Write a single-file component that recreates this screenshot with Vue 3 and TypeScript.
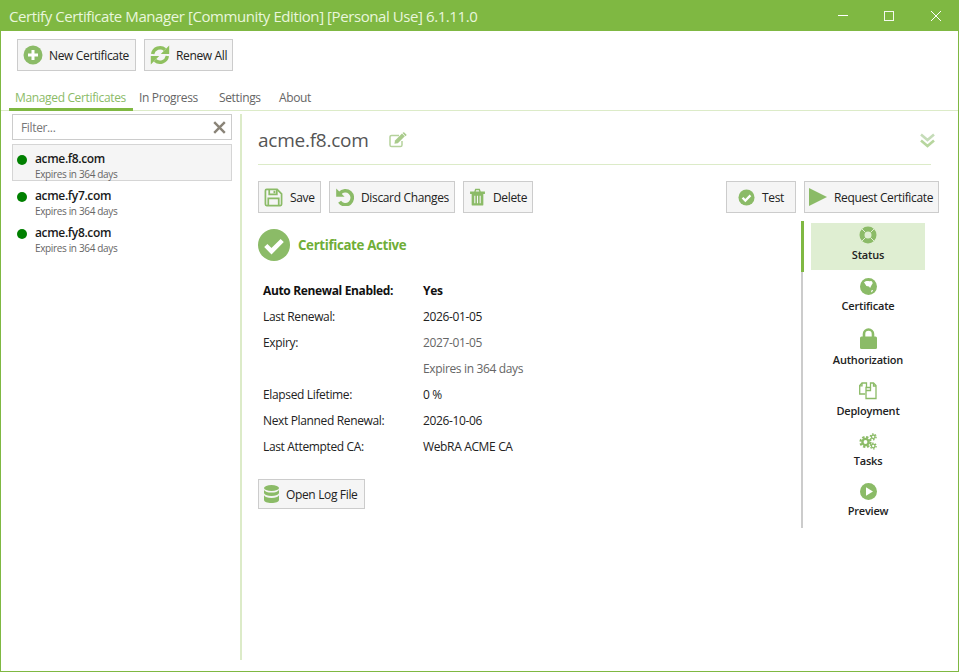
<script setup lang="ts">
const sites = [
  { name: "acme.f8.com", selected: true },
  { name: "acme.fy7.com", selected: false },
  { name: "acme.fy8.com", selected: false },
];

const tabs = ["Managed Certificates", "In Progress", "Settings", "About"];

const details = [
  { label: "Auto Renewal Enabled:", value: "Yes", kind: "strong" },
  { label: "Last Renewal:", value: "2026-01-05", kind: "" },
  { label: "Expiry:", value: "2027-01-05", kind: "muted" },
  { label: "", value: "Expires in 364 days", kind: "muted" },
  { label: "Elapsed Lifetime:", value: "0 %", kind: "" },
  { label: "Next Planned Renewal:", value: "2026-10-06", kind: "" },
  { label: "Last Attempted CA:", value: "WebRA ACME CA", kind: "" },
];
</script>

<template>
  <div class="window">
    <header class="titlebar">
      <span class="title">Certify Certificate Manager [Community Edition] [Personal Use] 6.1.11.0</span>
      <div class="controls">
        <svg width="46" height="31" viewBox="0 0 46 31"><path d="M17 15.500h10" stroke="#fff" /></svg>
        <svg width="46" height="31" viewBox="0 0 46 31"><rect x="17.500" y="11.500" width="9" height="9" fill="none" stroke="#f4f9ee" /></svg>
        <svg width="46" height="31" viewBox="0 0 46 31"><path d="M18 11l10 10M28 11l-10 10" stroke="#fff" /></svg>
      </div>
    </header>

    <div class="toolbar">
      <button class="btn new-btn">
        <svg width="20" height="20" viewBox="0 0 20 20"><circle cx="10" cy="10" r="9.500" fill="#8bbb67" /><path d="M10 5v10M5 10h10" stroke="#fff" stroke-width="3" /></svg>
        New Certificate
      </button>
      <button class="btn renew-btn">
        <svg width="20" height="20" viewBox="0 0 20 20"><g fill="none" stroke="#8fc05f" stroke-width="3.400"><path d="M2.600 9A7.600 7.600 0 0 1 15 4.600" /><path d="M17.400 11A7.600 7.600 0 0 1 5 15.400" /></g><path d="M19.200 .6v8.400H10.800zM.8 19.400V11H9.200z" fill="#8fc05f" /></svg>
        Renew All
      </button>
    </div>

    <nav class="tabs">
      <span v-for="(tab, i) in tabs" :key="tab" class="tab" :class="['tab' + i, { active: i === 0 }]">{{ tab }}</span>
    </nav>

    <main class="body">
      <aside class="sidebar">
        <div class="filter">
          <span>Filter...</span>
          <svg width="13" height="13" viewBox="0 0 13 13"><path d="M1.200 1.200l10.600 10.600M11.800 1.200L1.200 11.800" stroke="#8a8478" stroke-width="2.400" /></svg>
        </div>
        <div v-for="site in sites" :key="site.name" class="site" :class="{ selected: site.selected }">
          <i class="dot"></i>
          <div>
            <div class="site-name">{{ site.name }}</div>
            <div class="site-exp">Expires in 364 days</div>
          </div>
        </div>
      </aside>

      <section class="detail">
        <div class="heading">
          <h1>acme.f8.com</h1>
          <svg class="edit" width="18" height="16" viewBox="0 0 18 16"><path d="M13 9v4a1.600 1.600 0 0 1-1.600 1.600H2.600A1.600 1.600 0 0 1 1 13V5a1.600 1.600 0 0 1 1.600-1.600H10" fill="none" stroke="#b5d29c" stroke-width="1.500" /><path d="M6 8.400l7-7 2.800 2.800-7 7-3.400.6z" fill="#a9cb8b" /><path d="M14 .5l1-.3 2.600 2.600-.5 1-.6.5L13.600 1z" fill="#a9cb8b" /></svg>
          <svg class="chevrons" width="15" height="15" viewBox="0 0 15 15" fill="none" stroke="#b7d69e" stroke-width="2.600"><path d="M1 1.500l6.500 5.500L14 1.500" stroke="#c5dcb8" /><path d="M1 7.500l6.500 5.500L14 7.500" /></svg>
        </div>

        <div class="actions">
          <button class="btn save-btn">
            <svg width="19" height="19" viewBox="0 0 20 20" fill="none" stroke="#8bbb67" stroke-width="1.800"><path d="M1.500 2.800c0-.7.6-1.300 1.300-1.300h11l4.700 4.700v11c0 .7-.6 1.300-1.300 1.300H2.800c-.7 0-1.300-.6-1.300-1.300z" /><path d="M5.500 1.800v5h8v-5M4.500 18v-7h11v7" /><path d="M11 3v2.500" stroke-width="2" /></svg>
            Save
          </button>
          <button class="btn discard-btn">
            <svg width="18" height="18" viewBox="0 0 18 18"><path d="M3.800 5.400A7 7 0 1 1 3.600 13.800" fill="none" stroke="#8bbb67" stroke-width="3.600" /><path d="M.2.400v8.400h8.400z" fill="#8bbb67" /></svg>
            Discard Changes
          </button>
          <button class="btn delete-btn">
            <svg width="17" height="18" viewBox="0 0 17 20"><path d="M1 4.500h15V6H1zM5.500 4.500l1-2.800h4l1 2.800" fill="none" stroke="#8bbb67" stroke-width="1.500" /><path d="M2 6h13v12.500a1 1 0 0 1-1 1H3a1 1 0 0 1-1-1z" fill="#8bbb67" /><path d="M5.500 8.500v8.500M8.500 8.500v8.500M11.500 8.500v8.500" stroke="#f5f5f5" stroke-width="1.200" /></svg>
            Delete
          </button>
          <span class="spacer"></span>
          <button class="btn test-btn">
            <svg width="17" height="17" viewBox="0 0 18 18"><circle cx="9" cy="9" r="8.500" fill="#8bbb67" /><path d="M4.800 9.200l3 3 5.400-5.400" fill="none" stroke="#fff" stroke-width="2.400" /></svg>
            Test
          </button>
          <button class="btn request-btn">
            <svg width="18" height="18" viewBox="0 0 18 18"><path d="M0 0l18 9-18 9z" fill="#8bbb67" /></svg>
            Request Certificate
          </button>
        </div>

        <div class="panels">
          <div class="status">
            <div class="status-head">
              <svg width="32" height="32" viewBox="0 0 32 32"><circle cx="16" cy="16" r="16" fill="#8bbb67" /><path d="M7.800 16.500l5.700 5.700 10.700-10.700" fill="none" stroke="#fff" stroke-width="4.500" /></svg>
              <span>Certificate Active</span>
            </div>
            <dl class="facts">
              <div v-for="row in details" :key="row.value" class="fact" :class="row.kind">
                <dt>{{ row.label }}</dt>
                <dd>{{ row.value }}</dd>
              </div>
            </dl>
            <button class="btn log-btn">
              <svg width="15" height="18" viewBox="0 0 15 18" fill="#8bbb67"><ellipse cx="7.500" cy="3" rx="7.500" ry="3" /><path d="M0 5c1 1.700 3.800 2.600 7.500 2.600S14 6.700 15 5v3.300c-1 1.700-3.800 2.600-7.500 2.600S1 10 0 8.300zM0 10.300c1 1.700 3.800 2.600 7.500 2.600S14 12 15 10.300V15c0 1.700-3.400 3-7.500 3S0 16.700 0 15z" /></svg>
              Open Log File
            </button>
          </div>

          <nav class="sidenav">
            <div class="navitem active">
              <svg width="18" height="18" viewBox="0 0 18 18"><circle cx="9" cy="9" r="6" fill="none" stroke="#8bbb67" stroke-width="5" /><path d="M3 3l3.400 3.400M15 3l-3.400 3.400M3 15l3.400-3.400M15 15l-3.400-3.400" stroke="#dfeed2" stroke-width="1" /></svg>
              <span>Status</span>
            </div>
            <div class="navitem cert">
              <svg width="17" height="17" viewBox="0 0 17 17"><circle cx="8.500" cy="8.500" r="8.500" fill="#8bbb67" /><path d="M4 4.200c1.600-1.500 3.800-1.500 5.500-1l1.800-.2c.9.700 1.400 1.500 1.300 2.400l-1 1.700-1.500 2.800L9 8.600 6.400 7.900zM11 12.800l1.700-.9.400.9-1.600 1.700z" fill="#fff" /></svg>
              <span>Certificate</span>
            </div>
            <div class="navitem auth">
              <svg width="17" height="21" viewBox="0 0 17 21"><path d="M4 9V6a4.500 4.500 0 0 1 9 0v3" fill="none" stroke="#8bbb67" stroke-width="2.600" /><rect y="8.500" width="17" height="12.500" rx="1.500" fill="#8bbb67" /></svg>
              <span>Authorization</span>
            </div>
            <div class="navitem deploy">
              <svg width="18" height="18" viewBox="0 0 18 18" fill="none" stroke="#8bbb67" stroke-width="1.300"><path d="M7.500 5V1H3L.7 3.500v8.500h5.500" /><path d="M3 1v2.800H.7" /><path d="M7 5.500h4.500V1h3L17 3.500v13H7z" fill="#fff" /><path d="M7 8.500h4.500v-3M14.500 1v3H17" /></svg>
              <span>Deployment</span>
            </div>
            <div class="navitem tasks">
              <svg width="18" height="17" viewBox="0 0 18 17" fill="none" stroke="#8bbb67"><circle cx="6.500" cy="9" r="5" stroke-width="2.200" stroke-dasharray="2.300 1.630" /><circle cx="6.500" cy="9" r="3.100" stroke-width="2.400" /><circle cx="14.200" cy="3.800" r="2.900" stroke-width="1.400" stroke-dasharray="1.500 1.540" /><circle cx="14.200" cy="3.800" r="1.800" stroke-width="1.300" /><circle cx="14.200" cy="13" r="2.900" stroke-width="1.400" stroke-dasharray="1.500 1.540" /><circle cx="14.200" cy="13" r="1.800" stroke-width="1.300" /></svg>
              <span>Tasks</span>
            </div>
            <div class="navitem preview">
              <svg width="17" height="17" viewBox="0 0 17 17"><circle cx="8.500" cy="8.500" r="8.500" fill="#8bbb67" /><path d="M6 4.200l7 4.300-7 4.300z" fill="#fff" /></svg>
              <span>Preview</span>
            </div>
          </nav>
        </div>
      </section>
    </main>
  </div>
</template>

<style scoped>
.window {
  width: 959px;
  height: 672px;
  box-sizing: border-box;
  border: 1px solid #7fb842;
  border-top: none;
  background: #fff;
  display: flex;
  flex-direction: column;
  font-family: "Open Sans", "Noto Sans", sans-serif;
  font-size: 12px;
  letter-spacing: -0.35px;
  color: #222;
  overflow: hidden;
}

.titlebar {
  height: 31px;
  margin: 0 -1px;
  flex: none;
  background: #7fb842;
  display: flex;
  align-items: center;
  justify-content: space-between;
}

.title {
  padding-left: 9px;
  font-size: 15px;
  letter-spacing: -0.42px;
  color: #e9f6dc;
  white-space: nowrap;
}

.controls {
  display: flex;
  align-items: center;
}

.toolbar {
  display: flex;
  gap: 8px;
  padding: 8px 0 0 16px;
  flex: none;
}

.btn {
  height: 32px;
  box-sizing: border-box;
  border: 1px solid #cccccc;
  background: #f5f5f5;
  display: flex;
  align-items: center;
  padding: 0;
  font: inherit;
  letter-spacing: inherit;
  color: #222;
  white-space: nowrap;
}

.toolbar .btn svg {
  margin: 0 6px 0 5px;
}

.new-btn { width: 119px; }
.renew-btn { width: 89px; }
.save-btn { width: 63px; }
.discard-btn { width: 126px; }
.delete-btn { width: 70px; }
.test-btn { width: 70px; }
.request-btn { width: 135px; }
.log-btn { width: 107px; height: 30px; }

.save-btn svg { margin: 0 7px 0 5px; }
.discard-btn svg { margin: 0 7px 0 6px; }
.delete-btn svg { margin: 0 7px 0 5px; }
.test-btn svg { margin: 0 7px 0 11px; }
.request-btn svg { margin: 0 7px 0 4px; }
.log-btn svg { margin: 0 7px 0 5px; }

.tabs {
  height: 40px;
  flex: none;
  box-sizing: border-box;
  display: flex;
  padding: 17px 0 0 8px;
  border-bottom: 1px solid #dcebc8;
  color: #666;
}

.tab {
  height: 22px;
  line-height: 19px;
  white-space: nowrap;
}

.tab0 { width: 124px; padding-left: 6px; box-sizing: border-box; }
.tab1 { width: 86px; padding-left: 6px; box-sizing: border-box; }
.tab2 { width: 60px; }
.tab3 { width: 60px; }

.tab.active {
  color: #8bbb67;
  border-bottom: 3px solid #7fb842;
  height: 23px;
  box-sizing: border-box;
}

.body {
  flex: 1;
  display: flex;
  min-height: 0;
  padding: 3px 0 11px 11px;
}

.sidebar {
  width: 220px;
  flex: none;
}

.filter {
  height: 26px;
  box-sizing: border-box;
  border: 1px solid #cccccc;
  display: flex;
  align-items: center;
  justify-content: space-between;
  padding: 0 5px 0 8px;
  color: #777;
  margin-bottom: 4px;
}

.site {
  height: 37px;
  box-sizing: border-box;
  border: 1px solid transparent;
  display: flex;
  align-items: flex-start;
  padding: 6px 0 0 4px;
}

.site.selected {
  background: #f5f5f5;
  border-color: #d5d5d5;
}

.dot {
  width: 10px;
  height: 10px;
  border-radius: 50%;
  background: #008000;
  margin: 4px 8px 0 0;
  flex: none;
}

.site-name {
  font-weight: 600;
  line-height: 16px;
  color: #1a1a1a;
}

.site-exp {
  font-size: 10px;
  line-height: 14px;
  color: #666;
}

.detail {
  margin-left: 8px;
  flex: 1;
  min-width: 0;
  border-left: 2px solid #dcebc8;
  padding-left: 16px;
  padding-right: 19px;
}

.heading {
  height: 51px;
  box-sizing: border-box;
  margin-right: 8px;
  padding-top: 2px;
  border-bottom: 1px solid #dcebc8;
  display: flex;
  align-items: center;
}

.heading h1 {
  margin: 0;
  font-size: 19px;
  font-weight: 400;
  letter-spacing: -0.24px;
  color: #555;
}

.edit {
  margin-left: 20px;
}

.chevrons {
  margin-left: auto;
  margin-right: -4px;
}

.actions {
  display: flex;
  gap: 8px;
  margin-top: 16px;
}

.spacer {
  flex: 1;
}

.panels {
  display: flex;
  margin-top: 8px;
}

.status {
  flex: 1;
  padding-top: 8px;
}

.status-head {
  display: flex;
  align-items: center;
  gap: 8px;
  height: 32px;
  font-size: 13.300px;
  font-weight: 700;
  color: #6fae37;
}

.facts {
  margin: 16px 0 20px 5px;
}

.fact {
  display: grid;
  grid-template-columns: 160px 1fr;
  height: 26px;
  align-items: center;
}

.fact dt,
.fact dd {
  margin: 0;
}

.fact.strong {
  font-weight: 700;
  color: #111;
}

.fact.muted dd {
  color: #666;
}

.sidenav {
  width: 138px;
  height: 307px;
  box-sizing: border-box;
  flex: none;
  border-left: 2px solid #cccccc;
  position: relative;
  padding: 2px 14px 0 8px;
}

.navitem {
  display: flex;
  flex-direction: column;
  align-items: center;
  font-weight: 600;
  font-size: 11px;
  letter-spacing: -0.2px;
  color: #222;
}

.navitem.active {
  background: #dfeed2;
  height: 47px;
  box-sizing: border-box;
  padding-top: 3px;
}

.navitem.active::before {
  content: "";
  position: absolute;
  left: -2px;
  top: 0;
  width: 3px;
  height: 51px;
  background: #7fb842;
}

.navitem span {
  line-height: 15px;
  margin-top: 3px;
}

.navitem.cert { margin-top: 8px; }
.navitem.auth { margin-top: 15px; }
.navitem.deploy { margin-top: 15px; }
.navitem.tasks { margin-top: 15px; }
.navitem.preview { margin-top: 15px; }
</style>

<style>
html,
body {
  margin: 0;
  background: #fff;
}
</style>
